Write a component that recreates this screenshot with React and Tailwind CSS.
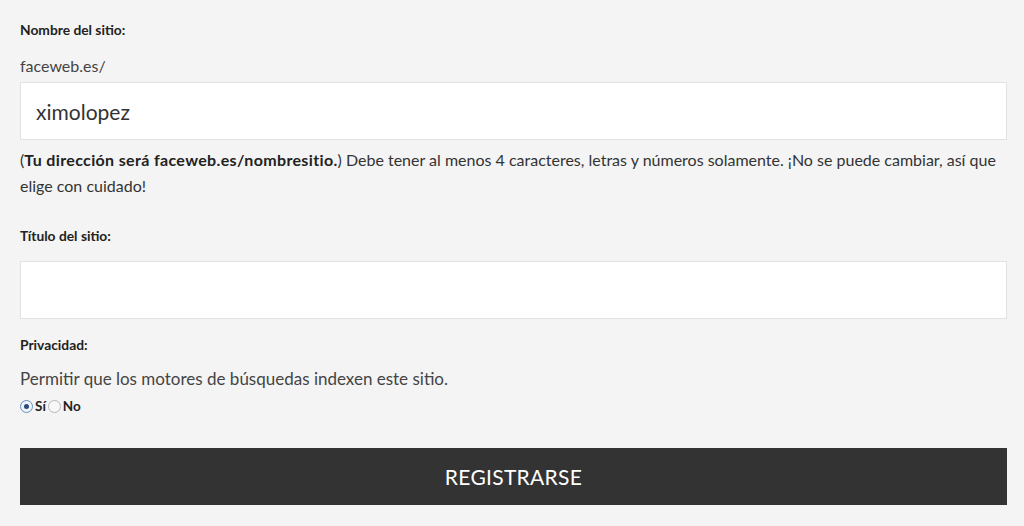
export default function App() {
  return (
    <div
      className="min-h-screen bg-[#f4f4f4] px-5 text-[#333]"
      style={{ fontFamily: "Lato, 'Open Sans', sans-serif" }}
    >
      <form className="pt-[21px]">
        <label className="block text-[13.8px] font-bold leading-[18px] text-[#222]">
          Nombre del sitio:
        </label>
        <p className="mt-[17px] text-[16px] leading-[20px] text-[#444]">faceweb.es/</p>
        <input
          type="text"
          defaultValue="ximolopez"
          className="mt-[6px] block h-[58px] w-[987px] border border-[#e2e2e2] bg-white px-[15px] text-[21px] text-[#333] outline-none"
        />
        <p className="mt-[7px] text-[16px] leading-[26px] text-[#333]">
          (<b className="font-bold tracking-[0.35px] text-[#222]">Tu dirección será faceweb.es/nombresitio.</b>) Debe
          tener al menos 4 caracteres, letras y números solamente. ¡No se puede cambiar, así que elige con cuidado!
        </p>

        <label className="mt-[28px] block text-[13.8px] font-bold leading-[18px] text-[#222]">
          Título del sitio:
        </label>
        <input
          type="text"
          className="mt-[16px] block h-[58px] w-[987px] border border-[#e2e2e2] bg-white px-[15px] text-[21px] outline-none"
        />

        <label className="mt-[17px] block text-[13.8px] font-bold leading-[18px] text-[#222]">
          Privacidad:
        </label>
        <p className="mt-[15px] text-[17px] leading-[20px] text-[#444]">
          Permitir que los motores de búsquedas indexen este sitio.
        </p>
        <div className="mt-[8px] flex items-center text-[13.5px] font-bold leading-[18px] text-[#222]">
          <span className="flex h-[13px] w-[13px] items-center justify-center rounded-full border border-[#6b8fc4] bg-[#eef3fa]">
            <span className="h-[5px] w-[5px] rounded-full bg-[#2a4a7a]" />
          </span>
          <span className="ml-[2px]">Sí</span>
          <span className="ml-[2px] h-[13px] w-[13px] rounded-full border border-[#b8b8b8] bg-[#f8f8f8]" />
          <span className="ml-[2px]">No</span>
        </div>

        <button
          type="button"
          className="mt-[33px] flex h-[57px] w-[987px] items-center justify-center bg-[#333333] text-[21px] tracking-[0.3px] text-white"
        >
          REGISTRARSE
        </button>
      </form>
    </div>
  );
}
